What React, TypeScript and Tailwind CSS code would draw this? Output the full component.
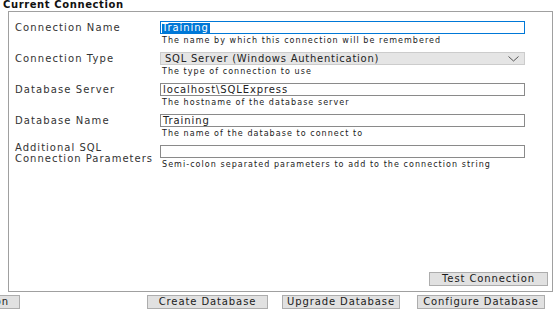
import React from "react";

const fields = [
  { label: "Connection Name", value: "Training", help: "The name by which this connection will be remembered", kind: "focus" },
  { label: "Connection Type", value: "SQL Server (Windows Authentication)", help: "The type of connection to use", kind: "select" },
  { label: "Database Server", value: "localhost\\SQLExpress", help: "The hostname of the database server", kind: "text" },
  { label: "Database Name", value: "Training", help: "The name of the database to connect to", kind: "text" },
];

function Chevron() {
  return (
    <svg width="11" height="6" viewBox="0 0 11 6" className="mr-[5px]">
      <polyline points="0.5,0.5 5.5,5 10.5,0.5" fill="none" stroke="#555" strokeWidth="1" />
    </svg>
  );
}

function Btn({ children, className }: { children: React.ReactNode; className?: string }) {
  return (
    <div
      className={
        "h-[14px] shrink-0 bg-[#e1e1e1] border border-[#adadad] flex items-center justify-center text-[10px] leading-[12px] tracking-[0.9px] text-[#1a1a1a] whitespace-nowrap overflow-hidden " +
        (className ?? "")
      }
    >
      {children}
    </div>
  );
}

export default function App() {
  return (
    <div className="w-[558px] h-[314px] bg-white overflow-hidden font-['DejaVu_Sans',sans-serif] text-[#333]">
      <div className="h-[12px] pl-[3px] -mt-px text-[10px] leading-[12px] font-bold tracking-[0.6px] text-[#111]">
        Current Connection
      </div>

      <div className="ml-[8px] w-[545px] h-[281px] border border-[#a0a0a0] flex flex-col pt-[9px] pl-[6px]">
        <div className="flex flex-col gap-[6px]">
          {fields.map((f) => (
            <div key={f.label} className="flex">
              <div className="w-[145px] h-[13px] flex items-center text-[10px] tracking-[1.1px] text-[#333] whitespace-nowrap">
                {f.label}
              </div>
              <div className="w-[365px]">
                {f.kind === "focus" && (
                  <div className="h-[13px] border border-[#0078d7] flex items-center px-px">
                    <span className="bg-[#0078d7] text-white text-[10px] leading-[10px] h-[10px] tracking-[0.9px] pr-px">
                      {f.value}
                    </span>
                  </div>
                )}
                {f.kind === "select" && (
                  <div className="h-[13px] border border-[#cccccc] bg-[#e5e5e5] flex items-center justify-between pl-[4px]">
                    <span className="text-[10px] leading-[11px] tracking-[0.75px] text-[#222]">{f.value}</span>
                    <Chevron />
                  </div>
                )}
                {f.kind === "text" && (
                  <div className="h-[13px] border border-[#8a8a8a] flex items-center pl-[2px]">
                    <span className="text-[10px] leading-[11px] tracking-[0.9px] text-[#222]">{f.value}</span>
                  </div>
                )}
                <div className="mt-px pl-[2px] h-[11px] text-[8px] leading-[11px] tracking-[1.05px] text-[#1a1a1a] whitespace-nowrap">
                  {f.help}
                </div>
              </div>
            </div>
          ))}

          <div className="flex">
            <div className="w-[145px] -mt-[3px] text-[10px] leading-[11px] tracking-[1px] text-[#333] whitespace-nowrap">
              Additional SQL
              <br />
              Connection Parameters
            </div>
            <div className="w-[365px]">
              <div className="h-[13px] border border-[#8a8a8a]" />
              <div className="mt-px pl-[2px] h-[11px] text-[8px] leading-[11px] tracking-[1.05px] text-[#1a1a1a] whitespace-nowrap">
                Semi-colon separated parameters to add to the connection string
              </div>
            </div>
          </div>
        </div>

        <div className="flex-1" />
        <div className="flex justify-end pr-[4px] pb-[5px]">
          <Btn className="w-[119px]">Test Connection</Btn>
        </div>
      </div>

      <div className="mt-[3px] flex">
        <Btn className="w-[120px] ml-[-100px]">Save Connection</Btn>
        <Btn className="w-[121px] ml-[127px]">Create Database</Btn>
        <Btn className="w-[118px] ml-[14px]">Upgrade Database</Btn>
        <Btn className="w-[128px] ml-[17px]">Configure Database</Btn>
      </div>
    </div>
  );
}
